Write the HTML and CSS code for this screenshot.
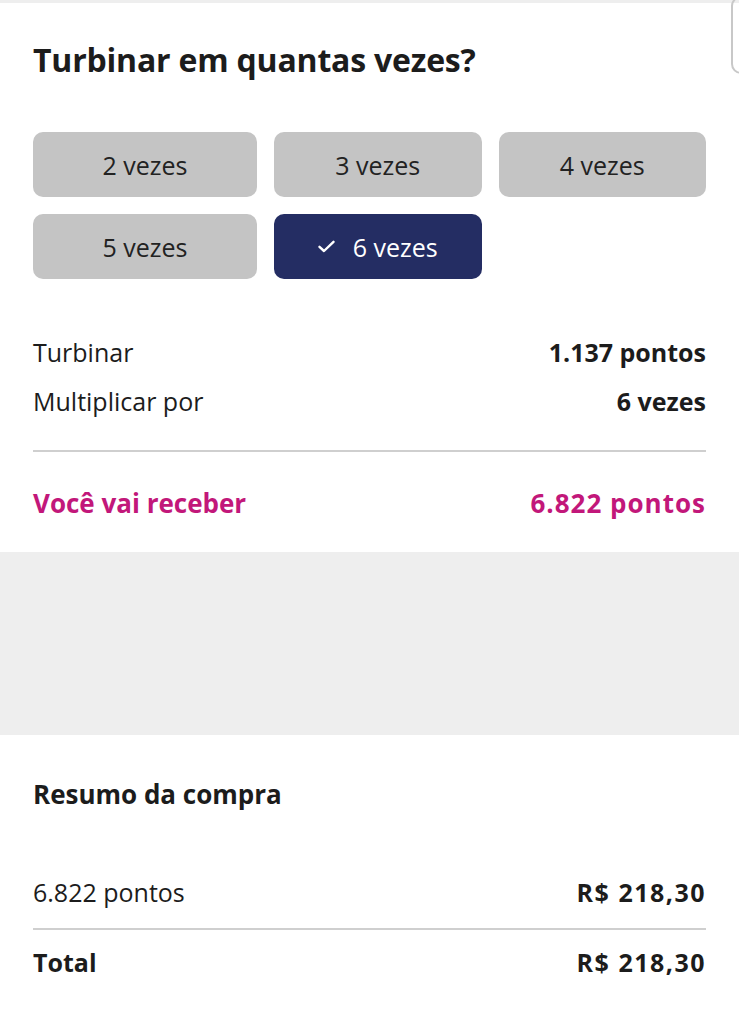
FILE: index.html
```html
<!DOCTYPE html>
<html lang="pt-BR">
<head>
    <meta charset="UTF-8">
    <meta name="viewport" content="width=device-width, initial-scale=1.0">
    <title>Turbinar pontos</title>
    <link rel="stylesheet" href="styles.css">
</head>
<body>
    <div class="side-tab"></div>

    <!-- Escolha do multiplicador -->
    <section class="card">
        <h1 class="card-title">Turbinar em quantas vezes?</h1>

        <div class="options">
            <button class="option">2 vezes</button>
            <button class="option">3 vezes</button>
            <button class="option">4 vezes</button>
            <button class="option">5 vezes</button>
            <button class="option selected">
                <svg class="check" width="17" height="13" viewBox="0 0 17 13">
                    <path d="M1.5 6.8 L6 11 L15.5 1.8" fill="none" stroke="#fff" stroke-width="2.4" stroke-linecap="round" stroke-linejoin="round"/>
                </svg>
                6 vezes
            </button>
        </div>

        <div class="rows">
            <div class="row"><span>Turbinar</span><b>1.137 pontos</b></div>
            <div class="row"><span>Multiplicar por</span><b>6 vezes</b></div>
        </div>
        <hr class="divider">
        <div class="row highlight"><b>Você vai receber</b><b class="num">6.822 pontos</b></div>
    </section>

    <div class="spacer"></div>

    <!-- Resumo -->
    <section class="card summary">
        <h2 class="summary-title">Resumo da compra</h2>
        <div class="row first"><span>6.822 pontos</span><b class="price">R$ 218,30</b></div>
        <hr class="divider tight">
        <div class="row total"><b>Total</b><b class="price">R$ 218,30</b></div>
    </section>
</body>
</html>
```

FILE: styles.css
```css
body {
    margin: 0;
    padding-top: 3px;
    background: #eeeeee;
    color: #1c1c1c;
    font-family: 'Open Sans', 'Noto Sans', sans-serif;
}

.side-tab {
    position: absolute;
    top: -4px;
    left: 731px;
    width: 30px;
    height: 78px;
    border: 2px solid #c8c8c8;
    border-radius: 10px;
    box-sizing: border-box;
}

.card {
    background: #fff;
    padding: 37px 33px 25px;
}

.card-title {
    margin: 0;
    font-size: 32px;
    line-height: 40px;
    font-weight: 700;
    letter-spacing: -0.2px;
}

.options {
    display: grid;
    grid-template-columns: 224px 1fr 1fr;
    gap: 17px;
    margin-top: 52px;
}

.option {
    height: 65px;
    border: none;
    border-radius: 10px;
    background: #c4c4c4;
    color: #222;
    font-family: inherit;
    font-size: 25px;
    display: flex;
    align-items: center;
    justify-content: center;
    gap: 18px;
    padding: 0;
}

.option.selected {
    background: #242d63;
    color: #fff;
}

.rows {
    margin-top: 48px;
}

.row {
    display: flex;
    justify-content: space-between;
    align-items: center;
    height: 49px;
    font-size: 25px;
}

.row b {
    font-weight: 700;
}

.num {
    letter-spacing: 1px;
}

.price {
    letter-spacing: 1.5px;
}

.divider {
    margin: 25px 0 27px;
    border: none;
    border-top: 2px solid #cfcfcf;
}

.highlight {
    height: 48px;
    color: #c2177a;
    font-size: 26px;
}

.spacer {
    height: 183px;
}

.summary {
    padding: 42px 33px 40px;
}

.summary-title {
    margin: 0;
    font-size: 26px;
    line-height: 34px;
    font-weight: 700;
}

.summary .row {
    height: 48px;
}

.summary .first {
    margin-top: 57px;
}

.divider.tight {
    margin: 12px 0 8px;
}
```
